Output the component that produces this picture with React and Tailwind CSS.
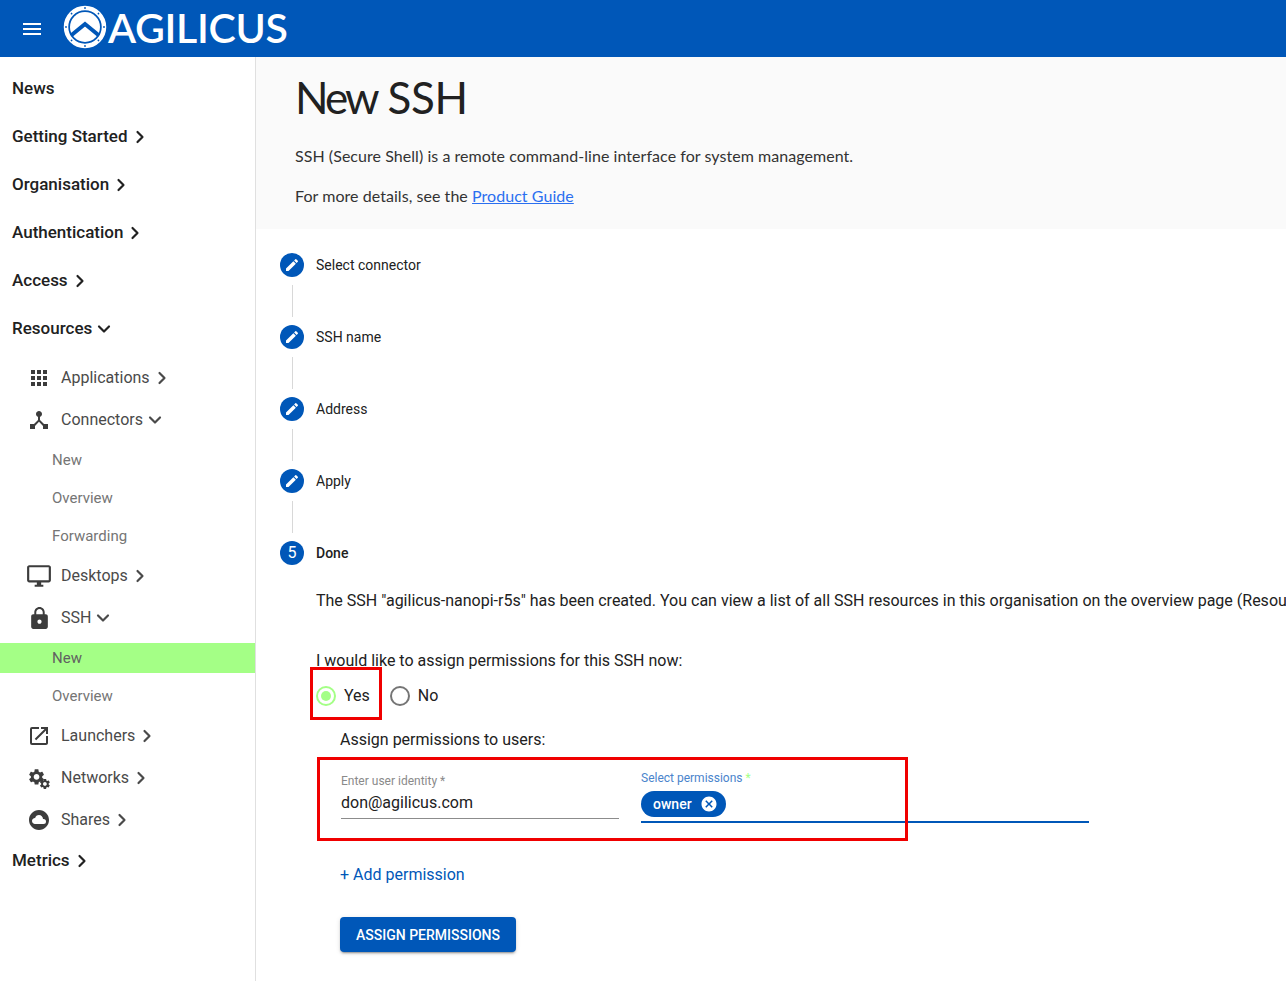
import React from "react";
import { ChevronRight, ChevronDown } from "lucide-react";
import {
  MdMenu,
  MdApps,
  MdDeviceHub,
  MdOutlineDesktopWindows,
  MdLock,
  MdOpenInNew,
  MdCloudCircle,
  MdEdit,
  MdCancel,
} from "react-icons/md";

const cogPath =
  "M19.14 12.94c.04-.3.06-.61.06-.94 0-.32-.02-.64-.07-.94l2.03-1.58c.18-.14.23-.41.12-.61l-1.92-3.32c-.12-.22-.37-.29-.59-.22l-2.39.96c-.5-.38-1.03-.7-1.62-.94l-.36-2.54c-.04-.24-.24-.41-.48-.41h-3.84c-.24 0-.43.17-.47.41l-.36 2.54c-.59.24-1.13.57-1.62.94l-2.39-.96c-.22-.08-.47 0-.59.22L2.74 8.87c-.12.21-.08.47.12.61l2.03 1.58c-.05.3-.09.63-.09.94s.02.64.07.94l-2.03 1.58c-.18.14-.23.41-.12.61l1.92 3.32c.12.22.37.29.59.22l2.39-.96c.5.38 1.03.7 1.62.94l.36 2.54c.05.24.24.41.48.41h3.84c.24 0 .44-.17.47-.41l.36-2.54c.59-.24 1.13-.56 1.62-.94l2.39.96c.22.08.47 0 .59-.22l1.92-3.32c.12-.22.07-.47-.12-.61l-2.01-1.58zM12 15.6c-1.98 0-3.6-1.62-3.6-3.6s1.62-3.6 3.6-3.6 3.6 1.62 3.6 3.6-1.62 3.6-3.6 3.6z";

function CogsIcon({ size = 24, className }) {
  return (
    <svg width={size} height={size} viewBox="0 0 24 24" fill="currentColor" className={className}>
      <path d={cogPath} transform="translate(-1 0.5) scale(0.86)" />
      <path d={cogPath} transform="translate(11.6 11.6) scale(0.57)" />
    </svg>
  );
}

function Logo() {
  return (
    <svg width="44" height="44" viewBox="0 0 44 44" className="shrink-0">
      <circle cx="22" cy="22" r="19" fill="none" stroke="#fff" strokeWidth="4.5" />
      <circle cx="22" cy="22" r="15" fill="#fff" />
      <path d="M8 30.5 L22 19 L36 30.5" fill="none" stroke="#0057b8" strokeWidth="4" />
      {[0, 45, 90, 135, 180, 225, 270, 315].map((a) => (
        <circle key={a} cx="22" cy="3" r="0.9" fill="#0057b8" transform={`rotate(${a} 22 22)`} />
      ))}
    </svg>
  );
}

function Chevron({ open }) {
  return open ? (
    <ChevronDown size={20} strokeWidth={2.6} className="ml-[2px]" />
  ) : (
    <ChevronRight size={20} strokeWidth={2.6} className="ml-[2px]" />
  );
}

function TopItem({ label, open, plain, className = "h-12" }) {
  return (
    <div className={`flex items-center pl-3 text-[17px] font-medium text-[#212121] ${className}`}>
      {label}
      {!plain && <Chevron open={open} />}
    </div>
  );
}

function SubItem({ icon: Icon, iconSize = 22, label, open }) {
  return (
    <div className="flex h-[42px] items-center text-base text-[#4a4a4a]">
      <div className="flex w-[61px] justify-center pl-[17px]">
        <Icon size={iconSize} className="text-[#3c3c3c]" />
      </div>
      <span>{label}</span>
      <Chevron open={open} />
    </div>
  );
}

function LeafItem({ label, active }) {
  return (
    <div className="flex h-[38px] items-center">
      <div className={`flex h-[30px] w-full items-center pl-[52px] text-[15px] ${active ? "bg-[#a4ff86] text-[#616161]" : "text-[#757575]"}`}>
        {label}
      </div>
    </div>
  );
}

function Sidebar() {
  return (
    <nav className="w-[256px] shrink-0 border-r border-[#e0e0e0] pt-2">
      <TopItem label="News" plain />
      <TopItem label="Getting Started" />
      <TopItem label="Organisation" />
      <TopItem label="Authentication" />
      <TopItem label="Access" />
      <TopItem label="Resources" open />
      <div className="pt-1">
        <SubItem icon={MdApps} iconSize={24} label="Applications" />
        <SubItem icon={MdDeviceHub} iconSize={24} label="Connectors" open />
        <LeafItem label="New" />
        <LeafItem label="Overview" />
        <LeafItem label="Forwarding" />
        <SubItem icon={MdOutlineDesktopWindows} iconSize={26} label="Desktops" />
        <SubItem icon={MdLock} iconSize={25} label="SSH" open />
        <LeafItem label="New" active />
        <LeafItem label="Overview" />
        <SubItem icon={MdOpenInNew} iconSize={24} label="Launchers" />
        <SubItem icon={CogsIcon} iconSize={22} label="Networks" />
        <SubItem icon={MdCloudCircle} iconSize={24} label="Shares" />
      </div>
      <TopItem label="Metrics" className="h-10" />
    </nav>
  );
}

function Step({ label, number, last }) {
  return (
    <div className="flex h-[72px] gap-3">
      <div className="flex w-6 flex-col items-center">
        <div className="flex h-6 w-6 shrink-0 items-center justify-center rounded-full bg-[#0057b8] text-base text-white">
          {number || <MdEdit size={16} />}
        </div>
        {!last && <div className="mt-2 h-8 w-px bg-[#d8d8d8]" />}
      </div>
      <div className={`pt-[3px] text-sm leading-[18px] text-[#212121] ${number ? "font-medium" : ""}`}>{label}</div>
    </div>
  );
}

export default function App() {
  return (
    <div className="flex h-[981px] w-[1286px] flex-col overflow-hidden bg-white font-['Roboto',sans-serif]">
      <header className="flex h-[57px] shrink-0 items-center bg-[#0057b8] text-white">
        <MdMenu size={24} className="ml-5" />
        <div className="mb-[4px] ml-[19px]">
          <Logo />
        </div>
        <span className="mb-[3px] ml-[1px] font-['Lato',sans-serif] text-[41px] leading-none font-semibold tracking-[-0.3px]">AGILICUS</span>
      </header>
      <div className="flex min-h-0 flex-1">
        <Sidebar />
        <main className="relative min-w-0 flex-1">
          <section className="h-[172px] bg-[#fafafa] pt-3 pl-[39px] font-['Lato',sans-serif] text-base tracking-[0.05px] text-[#333333]">
            <h1 className="text-[44px] leading-[56px] font-normal tracking-[-0.3px] text-[#212121]">
              <span className="tracking-[-3px]">New</span> SSH
            </h1>
            <p className="mt-[19px] leading-6">SSH (Secure Shell) is a remote command-line interface for system management.</p>
            <p className="mt-4 leading-6">
              For more details, see the <a className="text-[#2a6ff0] underline">Product Guide</a>
            </p>
          </section>
          <div className="pt-6 pl-6">
            <Step label="Select connector" />
            <Step label="SSH name" />
            <Step label="Address" />
            <Step label="Apply" />
            <Step label="Done" number="5" last />
          </div>
          <div className="-mt-[24px] pl-[60px] text-base text-[#212121]">
            <p className="h-6 leading-6 whitespace-nowrap">
              The SSH "agilicus-nanopi-r5s" has been created. You can view a list of all SSH resources in this organisation on the overview page (Resources &gt; SSH &gt; Overview).
            </p>
            <p className="mt-9 h-6 leading-6">I would like to assign permissions for this SSH now:</p>
            <div className="mt-[11px] flex h-6 items-center">
              <span className="flex h-5 w-5 items-center justify-center rounded-full border-2 border-[#a4ff86]">
                <span className="h-2.5 w-2.5 rounded-full bg-[#a4ff86]" />
              </span>
              <span className="ml-2">Yes</span>
              <span className="ml-5 h-5 w-5 rounded-full border-2 border-[#757575]" />
              <span className="ml-2">No</span>
            </div>
            <div className="pl-6">
              <p className="mt-[20px] h-6 leading-6">Assign permissions to users:</p>
              <div className="mt-[15px] flex h-[64px] items-start gap-[22px] pl-px">
                <div className="w-[278px] border-b border-[#8c8c8c] pt-[7px] pb-[3px]">
                  <div className="text-xs leading-[14px] text-[#8a8a8a]">Enter user identity *</div>
                  <div className="mt-[3px] h-6 leading-6">don@agilicus.com</div>
                </div>
                <div className="w-[448px] border-b-2 border-[#0057b8]">
                  <div className="pt-1 text-xs leading-[14px] text-[#4a84cc]">
                    Select permissions <span className="text-[#a4ff86]">*</span>
                  </div>
                  <div className="mt-[6px] pb-1">
                    <span className="inline-flex h-[26px] items-center rounded-full bg-[#0057b8] pr-2 pb-px pl-3 text-sm font-medium text-white">
                      owner
                      <MdCancel size={18} className="mt-px ml-2" />
                    </span>
                  </div>
                </div>
              </div>
              <a className="mt-[32px] block h-6 leading-6 text-[#0057b8]">+ Add permission</a>
              <button className="mt-[30px] h-[35px] w-[176px] rounded bg-[#0057b8] text-sm font-medium text-white uppercase shadow-[0_3px_1px_-2px_rgba(0,0,0,0.2),0_2px_2px_0_rgba(0,0,0,0.14),0_1px_5px_0_rgba(0,0,0,0.12)]">
                Assign permissions
              </button>
            </div>
          </div>
          {/* red annotation boxes drawn over the form */}
          <div className="absolute top-[610px] left-[54px] h-[53px] w-[72px] border-[3px] border-[#f00000]" />
          <div className="absolute top-[700px] left-[61px] h-[84px] w-[591px] border-[3px] border-[#f00000]" />
        </main>
      </div>
    </div>
  );
}
